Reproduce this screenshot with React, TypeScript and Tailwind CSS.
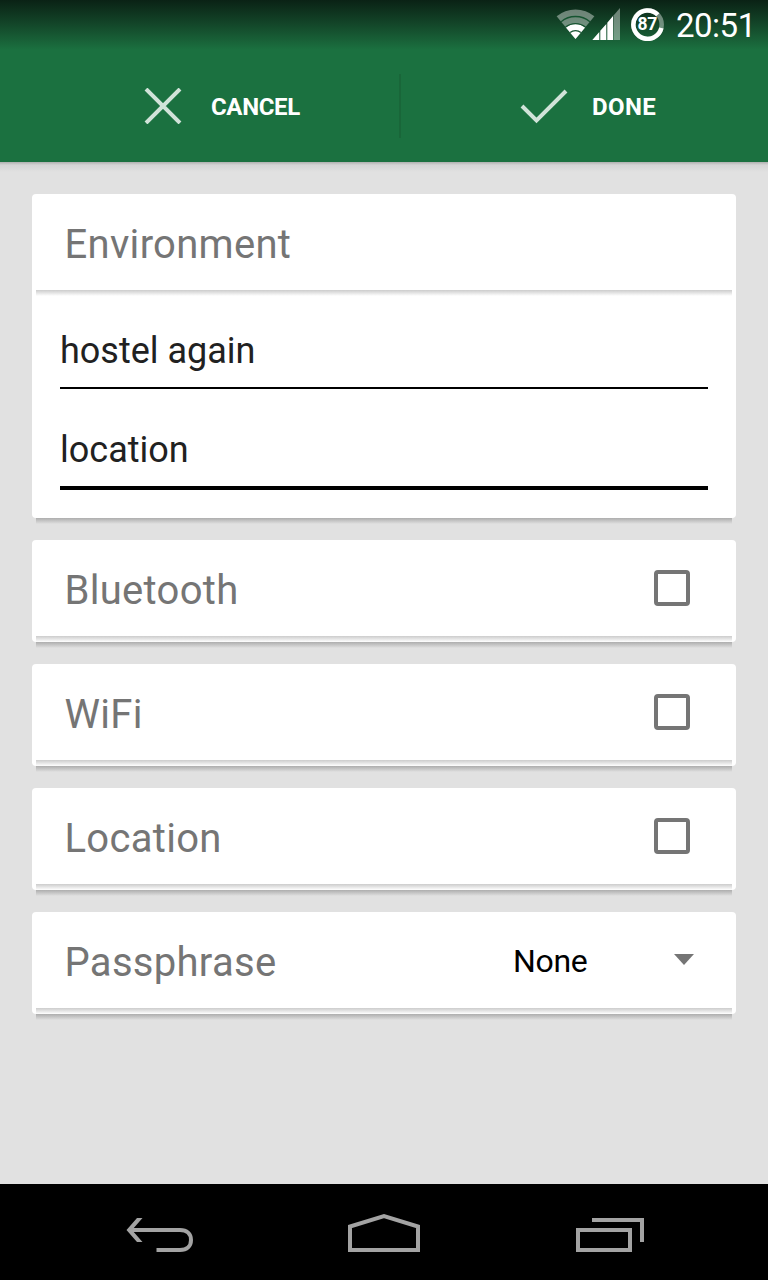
import type { ReactNode } from "react";

function StatusBar() {
  return (
    <div className="flex h-[50px] items-start bg-linear-to-b from-[#0a2215] to-[#1b7140] pl-[556px] text-white">
      <svg className="mt-[8px] h-8 w-[64px] shrink-0" viewBox="0 0 64 32">
        <path d="M19.5 31 L0.6 8.3 A29.5 29.5 0 0 1 38.4 8.3 Z" fill="#fff" fillOpacity=".4" />
        <path d="M19.5 31 L9.9 19.5 A15 15 0 0 1 29.1 19.5 Z" fill="#fff" />
        <path d="M5.1 13.7 A22.5 22.5 0 0 1 33.9 13.7 M9.6 19.1 A15.5 15.5 0 0 1 29.4 19.1 M14.1 24.5 A8.5 8.5 0 0 1 24.9 24.5" fill="none" stroke="#165431" strokeWidth="1.3" />
        <path d="M57.5 7.500 L64 0 V32 H57.5 Z" fill="#fff" fillOpacity=".4" />
        <path d="M36.3 32 L43.3 24 V32 Z M44.3 22.8 L50.3 16 V32 H44.300 Z M51.3 14.7 L57 8 V32 H51.3 Z" fill="#fff" />
      </svg>
      <svg className="mt-[7px] ml-[10px] h-[34px] w-[35px] shrink-0" viewBox="0 0 35 34">
        <circle cx="17.5" cy="17.5" r="14.200" fill="none" stroke="#fff" strokeOpacity=".4" strokeWidth="4.500" />
        <path d="M31.4 21 A14.2 14.2 0 1 1 27.8 7.8" fill="none" stroke="#fff" strokeWidth="4.5" />
        <text x="17.2" y="23.3" textAnchor="middle" fontSize="17.500" fontWeight="700" letterSpacing="-.4" fill="#fff" className="font-['Roboto',sans-serif]">87</text>
      </svg>
      <span className="mt-[6px] ml-[11px] text-[33px] leading-10 tracking-[-0.5px]">20:51</span>
    </div>
  );
}

function ActionBar() {
  return (
    <div className="flex h-28 bg-[#1b7140] text-2xl font-bold text-white">
      <button className="flex w-[399px] items-center pl-[144px]">
        <svg className="h-9 w-[38px]" viewBox="0 0 38 36">
          <path d="M2 1 L36 35 M36 1 L2 35" stroke="#d1e3d9" strokeWidth="4" />
        </svg>
        <span className="ml-[29px] pt-[2px] tracking-[-0.35px]">CANCEL</span>
      </button>
      <div className="mt-[24px] h-16 w-[2px] shrink-0 bg-[#196639]" />
      <button className="flex flex-1 items-center pl-[119px]">
        <svg className="h-9 w-12" viewBox="0 0 48 36">
          <path d="M2 18 L16.5 32.5 L46 3" fill="none" stroke="#d1e3d9" strokeWidth="4" />
        </svg>
        <span className="ml-6 pt-[2px] tracking-[0.4px]">DONE</span>
      </button>
    </div>
  );
}

function Card({ title, control, children }: { title: string; control?: ReactNode; children?: ReactNode }) {
  return (
    <section>
      <div className="rounded-[4px] bg-white">
        <div className="flex h-24 items-center pl-8">
          <h2 className="flex-1 pt-[6px] pl-[0.5px] text-[40px] leading-12 tracking-[0.3px] text-[#757575]">{title}</h2>
          {control}
        </div>
        <div className="mx-1 h-[6px] bg-linear-to-b from-[#cccccc] to-white" />
        {children}
      </div>
      <div className="mx-1 h-[6px] bg-linear-to-b from-[#adadad] to-[#e1e1e1]" />
    </section>
  );
}

function Checkbox() {
  return <div className="mr-[46px] size-9 rounded-[4px] border-4 border-[#757575]" />;
}

function PassphraseSelect() {
  return (
    <div className="flex w-[223px] items-center">
      <span className="flex-1 pt-[2px] text-[32px] leading-10 tracking-[-0.3px] text-black">None</span>
      <svg className="mr-[42px] mb-[1px] h-[11px] w-5" viewBox="0 0 20 11">
        <path d="M0 0 H20 L10 11 Z" fill="#757575" />
      </svg>
    </div>
  );
}

function NavigationBar() {
  return (
    <nav className="flex h-24 bg-black">
      <svg className="h-24 w-full" viewBox="0 0 768 96" fill="none" stroke="#a3a3a3" strokeWidth="4">
        <path d="M130 46 H180 C187 46 191 50 191 56 S187 66 180 66 H156.500" />
        <path d="M126.500 46 L137 34 H142.500 L132 46 L142.500 58 H137 Z" fill="#a3a3a3" stroke="none" />
        <path d="M350 66 V42.500 L384 32 L418 42.500 V66 Z" />
        <path d="M578 46 H630 V66 H578 Z M592 36 H642 V58" strokeMiterlimit="10" />
      </svg>
    </nav>
  );
}

export default function App() {
  return (
    <div className="flex h-[1280px] w-[768px] flex-col bg-[#e1e1e1] font-['Roboto',sans-serif]">
      <StatusBar />
      <ActionBar />
      <div className="h-[10px] bg-linear-to-b from-[#b0b0b0] via-[#d5d5d5] via-30% to-[#e1e1e1]" />
      <main className="flex flex-1 flex-col gap-4 px-8 pt-[22px]">
        <Card title="Environment">
          <div className="h-[222px] px-7 pt-8 text-4xl text-[#212121]">
            <div className="h-[61px] border-b-2 border-black leading-[46px]">hostel again</div>
            <div className="mt-[38px] h-[63px] border-b-4 border-black leading-[46px]">location</div>
          </div>
        </Card>
        <Card title="Bluetooth" control={<Checkbox />} />
        <Card title="WiFi" control={<Checkbox />} />
        <Card title="Location" control={<Checkbox />} />
        <Card title="Passphrase" control={<PassphraseSelect />} />
      </main>
      <NavigationBar />
    </div>
  );
}
